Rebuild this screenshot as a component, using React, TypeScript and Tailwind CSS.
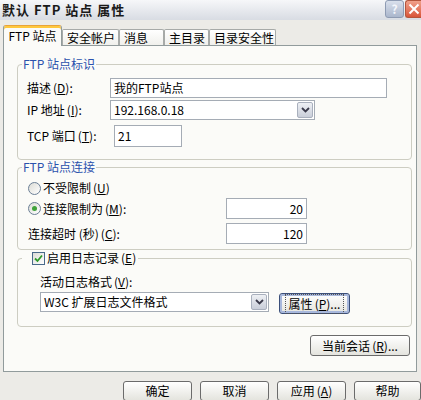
import type { ReactNode } from "react";

function Key({ c }: { c: string }) {
  return (
    <span className="ml-[2px]">
      (<span className="underline">{c}</span>)
    </span>
  );
}

function Btn({ children, className = "", focused = false }: { children: ReactNode; className?: string; focused?: boolean }) {
  return (
    <div
      className={`flex items-center justify-center rounded-[3px] border bg-gradient-to-b from-white to-[#e4e4de] text-[12px] text-black ${
        focused ? "border-[#3b4f7a] shadow-[inset_0_0_0_2px_#a8b8dc]" : "border-[#6b6b6b]"
      } ${className}`}
    >
      {focused ? <span className="px-[3px] outline-1 outline-dotted outline-[#555]">{children}</span> : children}
    </div>
  );
}

function TextBox({ value, className = "", right = false }: { value: string; className?: string; right?: boolean }) {
  return (
    <div className={`flex items-center border border-[#a5acb5] bg-white px-[3px] text-[12px] text-black ${right ? "justify-end" : ""} ${className}`}>
      {value}
    </div>
  );
}

function Chevron() {
  return (
    <svg width="9" height="6" viewBox="0 0 9 6">
      <path d="M1 1 L4.5 4.5 L8 1" fill="none" stroke="#3a3a4a" strokeWidth="1.8" />
    </svg>
  );
}

function Combo({ value, className = "" }: { value: string; className?: string }) {
  return (
    <div className={`flex items-stretch border border-[#a5acb5] bg-white ${className}`}>
      <div className="flex flex-1 items-center px-[3px] text-[12px] text-black">{value}</div>
      <div className="m-[1px] flex w-[16px] items-center justify-center rounded-[2px] border border-[#a9b0bd] bg-gradient-to-b from-[#eef0f4] to-[#c9ced9]">
        <Chevron />
      </div>
    </div>
  );
}

function Radio({ checked }: { checked: boolean }) {
  return (
    <div className="flex h-[13px] w-[13px] items-center justify-center rounded-full border border-[#6b7f96] bg-gradient-to-br from-[#dcdcd6] to-white">
      {checked && <div className="h-[5px] w-[5px] rounded-full bg-[#3fa23a]" />}
    </div>
  );
}

function Check() {
  return (
    <div className="flex h-[13px] w-[13px] items-center justify-center border border-[#4a6a8a] bg-gradient-to-br from-[#dcdcd6] to-white">
      <svg width="9" height="9" viewBox="0 0 9 9">
        <path d="M1 4.5 L3.5 7 L8 1.5" fill="none" stroke="#2f9a2a" strokeWidth="1.8" />
      </svg>
    </div>
  );
}

function Group({ title, className = "", children }: { title: ReactNode; className?: string; children: ReactNode }) {
  return (
    <div className={`relative ml-[13px] w-[395px] rounded-[4px] border border-[#cdcdc2] ${className}`}>
      <div className="absolute -top-[8px] left-[4px] flex items-center bg-[#fbfbf8] px-[1px] text-[12px] leading-[14px]">{title}</div>
      {children}
    </div>
  );
}

export default function App() {
  const tabs = ["安全帐户", "消息", "主目录", "目录安全性"];
  const tabWidths = ["w-[57px]", "w-[45px]", "w-[45px]", "w-[67px]"];

  return (
    <div className="h-[400px] w-[421px] overflow-hidden bg-[#ecebe7] font-['Noto_Sans_CJK_SC',sans-serif] text-[12px] text-black">
      {/* title bar */}
      <div className="flex h-[20px] items-start justify-between bg-gradient-to-b from-[#f6f7f9] to-[#d8dce3]">
        <div className="pl-[2px] pt-[1px] text-[13px] font-bold leading-[18px] tracking-[1px] text-[#1a1a1a]">默认 FTP 站点 属性</div>
        <div className="flex gap-[1px]">
          <div className="flex h-[18px] w-[19px] items-center justify-center rounded-[3px] border border-[#8e9bb3] bg-gradient-to-b from-[#d9e0ec] to-[#aab6cc] text-[12px] font-bold text-[#f4f6fb]">
            ?
          </div>
          <div className="flex h-[18px] w-[16px] items-center justify-start rounded-l-[3px] border border-r-0 border-[#b4553c] bg-gradient-to-b from-[#f0a08a] to-[#d8553a] pl-[2px]">
            <svg width="12" height="12" viewBox="0 0 12 12">
              <path d="M1.5 1.5 L10.5 10.5 M10.5 1.5 L1.5 10.5" stroke="white" strokeWidth="2" />
            </svg>
          </div>
        </div>
      </div>

      {/* tabs */}
      <div className="relative z-10 flex h-[25px] items-end pl-[3px]">
        <div className="mb-[-1px] flex h-[21px] w-[59px] items-center justify-center rounded-t-[3px] border border-b-0 border-[#919b9c] border-t-[#e8a33a] bg-[#fbfbf8] shadow-[inset_0_2px_0_#ffc83c]">
          FTP 站点
        </div>
        {tabs.map((t, i) => (
          <div
            key={t}
            className={`flex h-[16px] items-center rounded-t-[2px] border border-b-0 border-[#a7aaa8] bg-gradient-to-b from-white to-[#f0f0ec] pl-[4px] ${tabWidths[i]}`}
          >
            {t}
          </div>
        ))}
      </div>

      {/* tab panel */}
      <div className="ml-[3px] flex h-[327px] w-[414px] flex-col border border-[#919b9c] bg-[#fbfbf8] pt-[18px]">
        <Group title={<span className="text-[#2b52ad]">FTP 站点标识</span>} className="h-[96px] pl-[9px] pt-[13px]">
          <div className="flex h-[20px] items-center">
            <div className="w-[83px]">
              描述<Key c="D" />:
            </div>
            <TextBox value="我的FTP站点" className="h-[20px] w-[277px]" />
          </div>
          <div className="mt-[2px] flex h-[20px] items-center">
            <div className="w-[83px]">
              IP 地址<Key c="I" />:
            </div>
            <Combo value="192.168.0.18" className="h-[20px] w-[205px]" />
          </div>
          <div className="mt-[5px] flex h-[22px] items-center">
            <div className="w-[87px]">
              TCP 端口<Key c="T" />:
            </div>
            <TextBox value="21" className="h-[22px] w-[68px]" />
          </div>
        </Group>

        <Group title={<span className="text-[#2b52ad]">FTP 站点连接</span>} className="mt-[7px] h-[83px] pl-[10px] pt-[13px]">
          <div className="flex h-[14px] items-center gap-[2px]">
            <Radio checked={false} />
            <span>
              不受限制<Key c="U" />
            </span>
          </div>
          <div className="mt-[3px] flex h-[21px] items-center">
            <div className="flex w-[198px] items-center gap-[2px]">
              <Radio checked />
              <span>
                连接限制为<Key c="M" />:
              </span>
            </div>
            <TextBox value="20" right className="h-[21px] w-[81px]" />
          </div>
          <div className="mt-[4px] flex h-[21px] items-center">
            <div className="w-[198px] pl-[-1px]">
              连接超时 (秒)<Key c="C" />:
            </div>
            <TextBox value="120" right className="h-[21px] w-[81px]" />
          </div>
        </Group>

        <Group
          title={
            <span className="flex items-center gap-[2px] pl-[9px] pr-[1px]">
              <Check />
              <span>
                启用日志记录<Key c="E" />
              </span>
            </span>
          }
          className="mt-[8px] h-[69px] pl-[22px] pt-[15px]"
        >
          <div className="h-[15px] leading-[15px]">
            活动日志格式<Key c="V" />:
          </div>
          <div className="mt-[1px] flex items-center">
            <Combo value="W3C 扩展日志文件格式" className="h-[20px] w-[229px]" />
            <Btn focused className="ml-[10px] mt-[3px] h-[21px] w-[71px]">
              属性<Key c="P" />...
            </Btn>
          </div>
        </Group>

        <div className="mr-[6px] mt-[8px] flex justify-end">
          <Btn className="h-[21px] w-[100px]">
            当前会话<Key c="R" />...
          </Btn>
        </div>
      </div>

      {/* bottom buttons */}
      <div className="mt-[9px] flex gap-[8px] pl-[123px]">
        <Btn className="h-[20px] w-[69px]">确定</Btn>
        <Btn className="h-[20px] w-[69px]">取消</Btn>
        <Btn className="h-[20px] w-[69px]">
          应用<Key c="A" />
        </Btn>
        <Btn className="h-[20px] w-[67px]">帮助</Btn>
      </div>
    </div>
  );
}
